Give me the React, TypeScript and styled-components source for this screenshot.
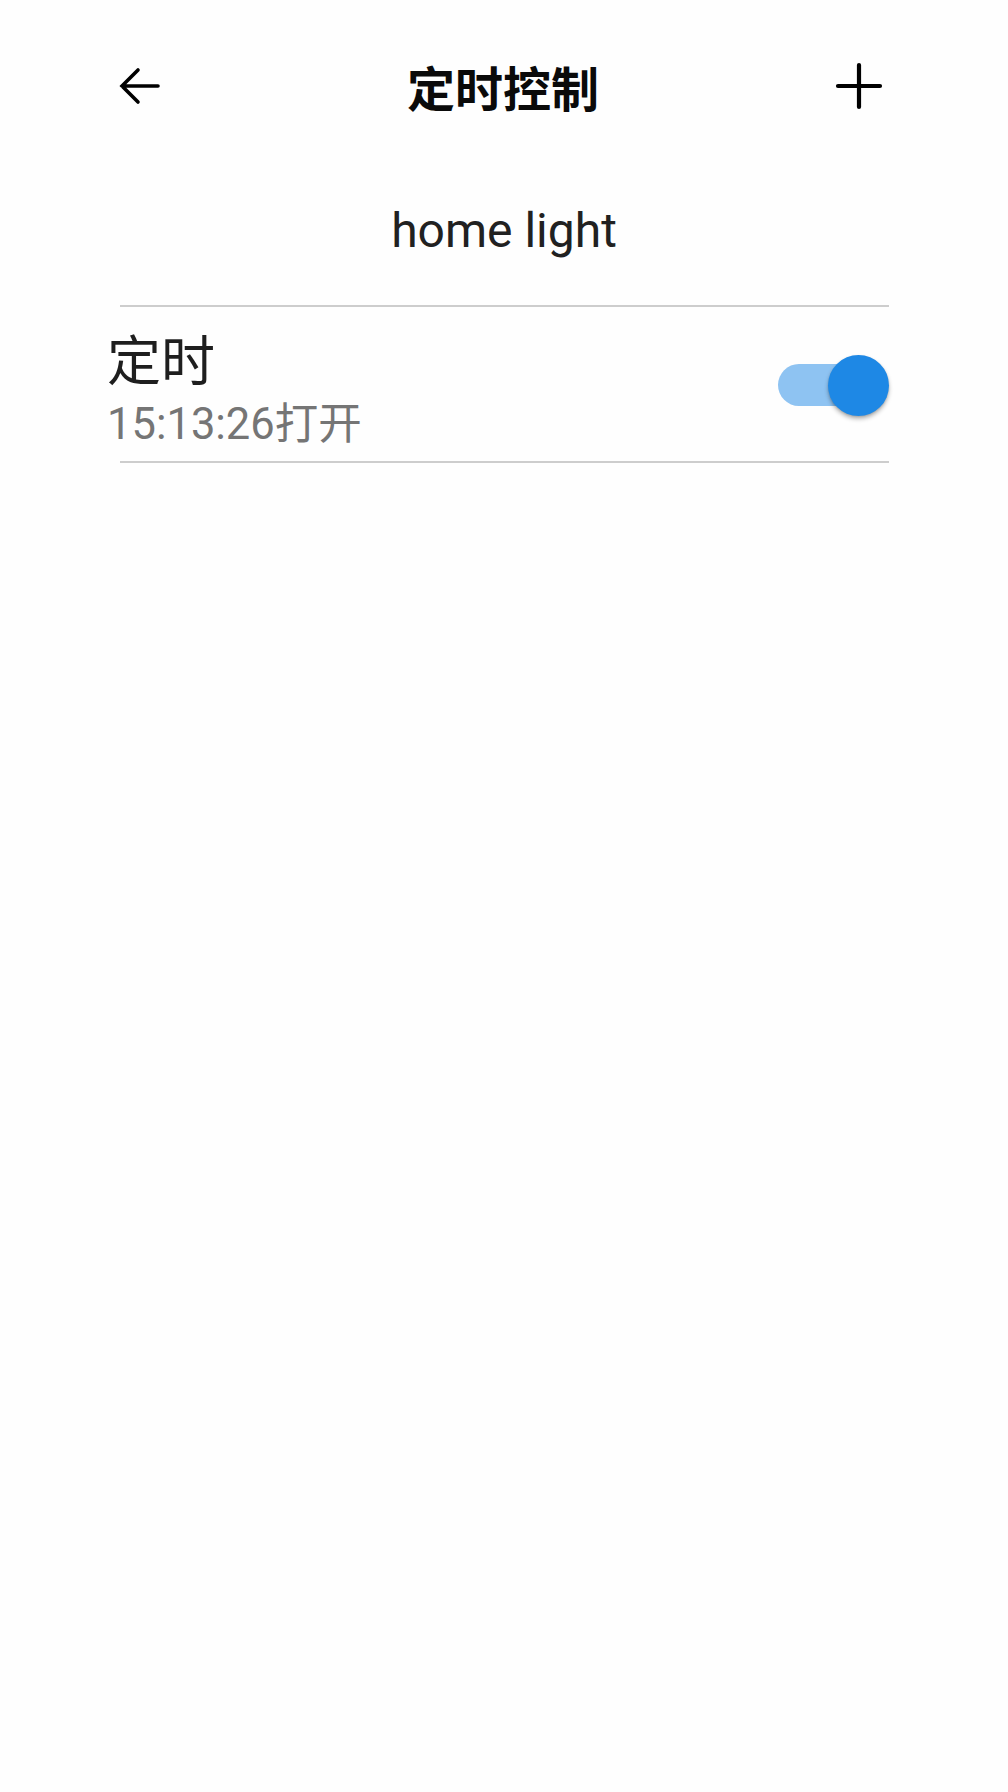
import React, { useState } from "react";
import styled, { createGlobalStyle } from "styled-components";

const GlobalStyle = createGlobalStyle`
  html, body {
    margin: 0;
    padding: 0;
    background: #ffffff;
  }
  body {
    font-family: Roboto, "Noto Sans CJK SC", sans-serif;
    -webkit-font-smoothing: antialiased;
  }
  * { box-sizing: border-box; }
`;

const Page = styled.div`
  width: 1008px;
  min-height: 1792px;
  background: #fefefe;
  display: flex;
  flex-direction: column;
`;

const Header = styled.header`
  margin-top: 36px;
  height: 100px;
  padding: 0 125px 0 115px;
  display: grid;
  grid-template-columns: 1fr auto 1fr;
  align-items: center;
`;

const IconButton = styled.button<{ $align: "start" | "end" }>`
  justify-self: ${(p) => p.$align};
  width: 48px;
  height: 48px;
  padding: 0;
  border: none;
  background: transparent;
  display: flex;
  align-items: center;
  justify-content: center;
  color: #000;
  cursor: pointer;
`;

const Title = styled.h1`
  margin: 0 0 0 8px;
  font-family: "Noto Sans CJK SC", sans-serif;
  font-weight: 700;
  font-size: 48px;
  line-height: 48px;
  color: #0a0a0a;
`;

const DeviceName = styled.div`
  margin-top: 71px;
  text-align: center;
  font-family: Roboto, "Noto Sans CJK SC", sans-serif;
  font-size: 48px;
  line-height: 48px;
  color: #212121;
`;

const List = styled.div`
  margin-top: 50px;
  padding: 0 119px 0 107px;
  display: flex;
  flex-direction: column;
`;

const Divider = styled.div`
  height: 2px;
  margin-left: 13px;
  background: #cdcdcd;
`;

const Row = styled.div`
  display: flex;
  align-items: center;
  justify-content: space-between;
  padding: 24px 0 15px;
`;

const RowText = styled.div`
  display: flex;
  flex-direction: column;
  gap: 18px;
`;

const RowTitle = styled.div`
  font-family: "Noto Sans CJK SC", sans-serif;
  font-size: 54px;
  line-height: 54px;
  color: #1e1e1e;
`;

const RowSubtitle = styled.div`
  font-family: Roboto, "Noto Sans CJK SC", sans-serif;
  font-size: 43.5px;
  line-height: 43px;
  color: #757575;
`;

const SwitchRoot = styled.button<{ $on: boolean }>`
  position: relative;
  width: 111px;
  height: 61px;
  margin: 0 0 7px 0;
  padding: 0;
  border: none;
  background: transparent;
  cursor: pointer;
`;

const SwitchTrack = styled.span<{ $on: boolean }>`
  position: absolute;
  left: 0;
  top: 9.5px;
  width: 102px;
  height: 42px;
  border-radius: 21px;
  background: ${(p) => (p.$on ? "rgba(30, 136, 229, 0.5)" : "rgba(0, 0, 0, 0.38)")};
`;

const SwitchThumb = styled.span<{ $on: boolean }>`
  position: absolute;
  top: 0;
  left: ${(p) => (p.$on ? "50px" : "0px")};
  width: 61px;
  height: 61px;
  border-radius: 50%;
  background: ${(p) => (p.$on ? "#1e88e5" : "#fafafa")};
  box-shadow: 0 3px 4px rgba(0, 0, 0, 0.28), 0 1px 2px rgba(0, 0, 0, 0.12);
`;

const BackIcon = () => (
  <svg width="48" height="48" viewBox="0 0 48 48" fill="none">
    <path
      d="M43 24H7M23 8L7 24L23 40"
      stroke="currentColor"
      strokeWidth="3.6"
      strokeLinecap="round"
      strokeLinejoin="miter"
    />
  </svg>
);

const PlusIcon = () => (
  <svg width="48" height="48" viewBox="0 0 48 48" fill="none">
    <path
      d="M24 3V45M3 24H45"
      stroke="currentColor"
      strokeWidth="4.2"
      strokeLinecap="round"
    />
  </svg>
);

export default function App() {
  const [on, setOn] = useState(true);
  return (
    <>
      <GlobalStyle />
      <Page>
        <Header>
          <IconButton $align="start" aria-label="back">
            <BackIcon />
          </IconButton>
          <Title>定时控制</Title>
          <IconButton $align="end" aria-label="add">
            <PlusIcon />
          </IconButton>
        </Header>
        <DeviceName>home light</DeviceName>
        <List>
          <Divider />
          <Row>
            <RowText>
              <RowTitle>定时</RowTitle>
              <RowSubtitle>15:13:26打开</RowSubtitle>
            </RowText>
            <SwitchRoot $on={on} onClick={() => setOn(!on)} aria-label="toggle">
              <SwitchTrack $on={on} />
              <SwitchThumb $on={on} />
            </SwitchRoot>
          </Row>
          <Divider />
        </List>
      </Page>
    </>
  );
}
